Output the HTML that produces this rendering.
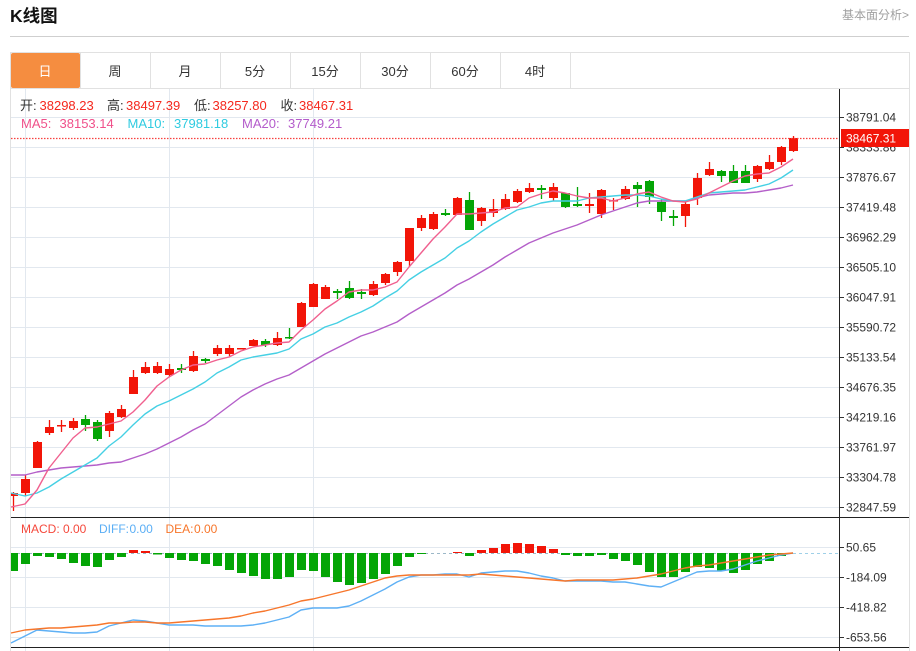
<!DOCTYPE html>
<html lang="zh-CN">
<head>
<meta charset="utf-8">
<title>K线图</title>
<style>
html,body{margin:0;padding:0;background:#fff;width:916px;height:651px;overflow:hidden}
svg{display:block;font-family:"Liberation Sans","Noto Sans CJK SC",sans-serif}
</style>
</head>
<body>
<svg width="916" height="651" viewBox="0 0 916 651" xmlns="http://www.w3.org/2000/svg">
<text x="10" y="22" font-size="17.500" font-weight="700" fill="#111">K线图</text>
<text x="842" y="19" font-size="12" fill="#a0a0a0">基本面分析&gt;</text>
<path d="M10 36.500H909" stroke="#cfcfcf" fill="none"/>

<g stroke="#e1e1e1" fill="none">
<path d="M10.500 52V651M909.500 52V651M10 52.500H910M10 88.500H910"/>
<path d="M80.500 53V88M150.500 53V88M220.500 53V88M290.500 53V88M360.500 53V88M430.500 53V88M500.500 53V88M570.500 53V88"/>
</g>
<rect x="11" y="53" width="69" height="35" rx="2" fill="#f58d40"/>
<g font-size="13" fill="#333" text-anchor="middle">
<text x="45" y="76" fill="#fff">日</text>
<text x="115" y="76">周</text>
<text x="185" y="76">月</text>
<text x="255" y="76">5分</text>
<text x="325" y="76">15分</text>
<text x="395" y="76">30分</text>
<text x="465" y="76">60分</text>
<text x="535" y="76">4时</text>
</g>

<path d="M11 117.500H839M11 147.500H839M11 177.500H839M11 207.500H839M11 237.500H839M11 267.500H839M11 297.500H839M11 327.500H839M11 357.500H839M11 387.500H839M11 417.500H839M11 447.500H839M11 477.500H839M11 507.500H839M11 547.500H839M11 577.500H839M11 607.500H839M11 637.500H839M25.500 89V651M169.500 89V651M313.500 89V651" stroke="#e2e8ef" fill="none"/>

<g font-size="13">
<text x="20" y="110" fill="#333">开:</text><text x="39.500" y="110" fill="#f5281e">38298.23</text>
<text x="107" y="110" fill="#333">高:</text><text x="126" y="110" fill="#f5281e">38497.39</text>
<text x="194" y="110" fill="#333">低:</text><text x="212.500" y="110" fill="#f5281e">38257.80</text>
<text x="280.500" y="110" fill="#333">收:</text><text x="299" y="110" fill="#f5281e">38467.31</text>
<text x="21" y="128" fill="#f0508a">MA5:</text><text x="59.500" y="128" fill="#f0508a">38153.14</text>
<text x="127.500" y="128" fill="#2fcbe0">MA10:</text><text x="174" y="128" fill="#2fcbe0">37981.18</text>
<text x="242" y="128" fill="#b45ccb">MA20:</text><text x="288" y="128" fill="#b45ccb">37749.21</text>
</g>
<g font-size="12">
<text x="21" y="533" fill="#f5483c">MACD:</text><text x="63" y="533" fill="#f5483c">0.00</text>
<text x="99" y="533" fill="#5aaef5">DIFF:</text><text x="129.500" y="533" fill="#5aaef5">0.00</text>
<text x="165.500" y="533" fill="#f7762b">DEA:</text><text x="194" y="533" fill="#f7762b">0.00</text>
</g>

<!-- wicks red -->
<path stroke="#f21508" stroke-width="1.300" fill="none" d="M13.500 492V511M25.500 475V496M37.500 441V468M49.500 420V435M61.500 420V432M73.500 418V430M109.500 411V437M121.500 405V418M133.500 370V394M145.500 362V374M157.500 362V374M169.500 364V377M193.500 351V372M217.500 345V356M229.500 345V356M253.500 339V346M277.500 332V346M301.500 302V327M313.500 283V307M325.500 285V299M373.500 281V296M385.500 273V285M397.500 261V276M409.500 228V266M421.500 215V231M433.500 212V230M457.500 197V215M481.500 207V226M493.500 199V217M505.500 194V210M517.500 189V203M529.500 183V193M553.500 183V201M589.500 193V213M601.500 189V218M613.500 198V210M625.500 186V200M685.500 202V227M697.500 173V205M709.500 162V176M757.500 165V182M769.500 155V170M781.500 146V165M793.500 136V152"/>
<!-- bodies red -->
<path fill="#f21508" d="M11 493h7v3h-7zM21 479h9v14h-9zM33 442h9v26h-9zM45 427h9v6h-9zM57 425h9v1.500h-9zM69 421h9v7h-9zM105 413h9v18h-9zM117 409h9v8h-9zM129 377h9v17h-9zM141 367h9v6h-9zM153 366h9v7h-9zM165 369h9v6h-9zM189 356h9v15h-9zM213 348h9v6h-9zM225 348h9v6h-9zM237 348h9v1.500h-9zM249 340h9v6h-9zM273 338h9v7h-9zM297 303h9v24h-9zM309 284h9v23h-9zM321 287h9v12h-9zM369 284h9v11h-9zM381 274h9v9h-9zM393 262h9v10h-9zM405 228h9v33h-9zM417 218h9v10h-9zM429 214h9v15h-9zM453 198h9v17h-9zM477 208h9v13h-9zM489 209h9v4h-9zM501 199h9v10h-9zM513 191h9v11h-9zM525 188h9v4h-9zM549 187h9v11h-9zM585 204h9v2h-9zM597 190h9v24h-9zM609 200h9v1.500h-9zM621 189h9v10h-9zM681 204h9v12h-9zM693 178h9v20h-9zM705 169h9v6h-9zM753 166h9v13h-9zM765 162h9v7h-9zM777 147h9v15h-9zM789 138h9v13h-9z"/>
<!-- wicks green -->
<path stroke="#04a506" stroke-width="1.300" fill="none" d="M85.500 415V431M97.500 420V441M181.500 364V373M205.500 358V363M265.500 339V347M289.500 328V339M337.500 289V299M349.500 281V299M361.500 289V299M445.500 209V216M469.500 192V230M541.500 185V199M565.500 193V208M577.500 187V207M637.500 182V207M649.500 180V204M661.500 199V221M673.500 210V226M721.500 170V182M733.500 165V183M745.500 165V183"/>
<!-- bodies green -->
<path fill="#04a506" d="M81 419h9v6h-9zM93 422h9v17h-9zM177 368h9v2h-9zM201 359h9v2h-9zM261 341h9v4h-9zM285 337h9v1.500h-9zM333 291h9v2h-9zM345 288h9v10h-9zM357 292h9v2h-9zM441 213h9v2h-9zM465 200h9v30h-9zM537 188h9v2h-9zM561 193h9v14h-9zM573 204h9v2h-9zM633 185h9v4h-9zM645 181h9v16h-9zM657 202h9v10h-9zM669 216h9v2h-9zM717 171h9v5h-9zM729 171h9v12h-9zM741 171h9v12h-9z"/>

<!-- MA lines -->
<polyline fill="none" stroke="#b45fc9" stroke-width="1.400" stroke-linejoin="round" points="11,475 25,475 37,472 49,470 61,468 73,467 85,466 97,465 109,463 121,462 133,458 145,454 157,449 169,443 181,437 193,430 205,424 217,415 229,406 241,397 253,390 265,384 277,379 289,375 301,368 313,361 325,354 337,348 349,342 361,336 373,332 385,327 397,322 409,314 421,307 433,300 445,293 457,285 469,279 481,272 493,265 505,257 517,250 529,243 541,238 553,233 565,229 577,225 589,220 601,215 613,211 625,207 637,203 649,201 661,201 673,201 685,201 697,198 709,195 721,194 733,193 745,193 757,192 769,190 781,188 793,185"/>
<polyline fill="none" stroke="#45d0e4" stroke-width="1.400" stroke-linejoin="round" points="11,493 25,496 37,493 49,487 61,479 73,472 85,465 97,458 109,446 121,437 133,425 145,414 157,406 169,401 181,395 193,389 205,382 217,373 229,367 241,360 253,357 265,355 277,353 289,349 301,339 313,334 325,327 337,323 349,317 361,312 373,306 385,298 397,291 409,280 421,272 433,265 445,258 457,248 469,241 481,232 493,224 505,217 517,210 529,207 541,203 553,201 565,201 577,201 589,198 601,197 613,196 625,195 637,195 649,196 661,199 673,201 685,201 697,197 709,193 721,192 733,191 745,190 757,187 769,184 781,178 793,170"/>
<polyline fill="none" stroke="#f0608f" stroke-width="1.400" stroke-linejoin="round" points="11,507 25,504 37,490 49,468 61,453 73,438 85,428 97,427 109,424 121,421 133,412 145,400 157,386 169,377 181,370 193,365 205,364 217,360 229,357 241,351 253,347 265,345 277,343 289,342 301,330 313,320 325,309 337,301 349,292 361,290 373,290 385,287 397,282 409,267 421,253 433,239 445,227 457,214 469,214 481,213 493,212 505,208 517,207 529,198 541,194 553,191 565,193 577,196 589,198 601,198 613,201 625,198 637,194 649,192 661,197 673,201 685,202 697,199 709,193 721,187 733,181 745,176 757,174 769,173 781,167 793,159"/>

<!-- last price line -->
<path d="M11 138.500H839" stroke="#f8403f" stroke-width="1.300" stroke-dasharray="1.500 1.500" fill="none"/>

<!-- MACD zero line -->
<path d="M11 553.500H793" stroke="#9cb8c8" stroke-dasharray="3 3" fill="none"/>
<path d="M793 553.500H838" stroke="#9fd0e8" stroke-dasharray="3 3" fill="none"/>

<!-- MACD bars -->
<path fill="#f21508" d="M129 550h9v3h-9zM141 551h9v2h-9zM453 552h9v1h-9zM477 550h9v3h-9zM489 548h9v5h-9zM501 544h9v9h-9zM513 543h9v10h-9zM525 544h9v9h-9zM537 546h9v7h-9zM549 549h9v4h-9z"/>
<path fill="#04a506" d="M11 553h7v18h-7zM21 553h9v11h-9zM33 553h9v3h-9zM45 553h9v4h-9zM57 553h9v6h-9zM69 553h9v10h-9zM81 553h9v13h-9zM93 553h9v14h-9zM105 553h9v7h-9zM117 553h9v4h-9zM153 553h9v1.500h-9zM165 553h9v5h-9zM177 553h9v7h-9zM189 553h9v8h-9zM201 553h9v11h-9zM213 553h9v13h-9zM225 553h9v17h-9zM237 553h9v20h-9zM249 553h9v23h-9zM261 553h9v26h-9zM273 553h9v26h-9zM285 553h9v24h-9zM297 553h9v17h-9zM309 553h9v18h-9zM321 553h9v24h-9zM333 553h9v29h-9zM345 553h9v32h-9zM357 553h9v30h-9zM369 553h9v26h-9zM381 553h9v21h-9zM393 553h9v13h-9zM405 553h9v4h-9zM417 553h9v1h-9zM465 553h9v3h-9zM561 553h9v2h-9zM573 553h9v3h-9zM585 553h9v3h-9zM597 553h9v2h-9zM609 553h9v6h-9zM621 553h9v8h-9zM633 553h9v12h-9zM645 553h9v19h-9zM657 553h9v24h-9zM669 553h9v24h-9zM681 553h9v19h-9zM693 553h9v14h-9zM705 553h9v15h-9zM717 553h9v18h-9zM729 553h9v20h-9zM741 553h9v17h-9zM753 553h9v11h-9zM765 553h9v8h-9zM777 553h9v3h-9z"/>

<polyline fill="none" stroke="#5eb0f5" stroke-width="1.400" stroke-linejoin="round" points="11,643 25,636 37,630 49,631 61,632 73,633 85,633 97,632 109,626 121,623 133,620 145,621 157,623 169,625 181,625 193,625 205,626 217,626 229,626 241,626 253,625 265,623 277,620 289,617 301,610 313,608 325,608 337,608 349,606 361,601 373,595 385,589 397,582 409,577 421,575 433,575 445,574 457,574 469,577 481,573 493,572 505,571 517,571 529,573 541,576 553,578 565,581 577,581 589,581 601,581 613,582 625,582 637,584 649,586 661,587 673,582 685,577 697,572 709,571 721,571 733,569 745,565 757,561 769,558 781,555 793,553"/>
<polyline fill="none" stroke="#f7762b" stroke-width="1.400" stroke-linejoin="round" points="11,633 25,630 37,629 49,628 61,628 73,627 85,626 97,625 109,623 121,623 133,622 145,622 157,623 169,623 181,622 193,621 205,620 217,619 229,618 241,616 253,613 265,611 277,608 289,605 301,601 313,599 325,596 337,593 349,590 361,586 373,582 385,578 397,576 409,575 421,575 433,575 445,575 457,575 469,575 481,574 493,575 505,576 517,577 529,578 541,579 553,580 565,581 577,580 589,580 601,580 613,580 625,579 637,578 649,576 661,574 673,571 685,568 697,566 709,565 721,563 733,561 745,559 757,557 769,555 781,554 793,553"/>

<!-- frame lines & axis -->
<path d="M11 517.500H909M11 647.500H909M839.500 89V651" stroke="#222" fill="none"/>
<path d="M840 117.500h4M840 147.500h4M840 177.500h4M840 207.500h4M840 237.500h4M840 267.500h4M840 297.500h4M840 327.500h4M840 357.500h4M840 387.500h4M840 417.500h4M840 447.500h4M840 477.500h4M840 507.500h4M840 547.500h4M840 577.500h4M840 607.500h4M840 637.500h4" stroke="#333" fill="none"/>
<g font-size="12" fill="#333">
<text x="846" y="121.500">38791.04</text>
<text x="846" y="151.500">38333.86</text>
<text x="846" y="181.500">37876.67</text>
<text x="846" y="211.500">37419.48</text>
<text x="846" y="241.500">36962.29</text>
<text x="846" y="271.500">36505.10</text>
<text x="846" y="301.500">36047.91</text>
<text x="846" y="331.500">35590.72</text>
<text x="846" y="361.500">35133.54</text>
<text x="846" y="391.500">34676.35</text>
<text x="846" y="421.500">34219.16</text>
<text x="846" y="451.500">33761.97</text>
<text x="846" y="481.500">33304.78</text>
<text x="846" y="511.500">32847.59</text>
<text x="846" y="551.500">50.65</text>
<text x="846" y="581.500">-184.09</text>
<text x="846" y="611.500">-418.82</text>
<text x="846" y="641.500">-653.56</text>
</g>
<rect x="841" y="129" width="68" height="18" fill="#f21508"/>
<text x="846" y="142.500" font-size="12" fill="#fff">38467.31</text>
</svg>
</body>
</html>
